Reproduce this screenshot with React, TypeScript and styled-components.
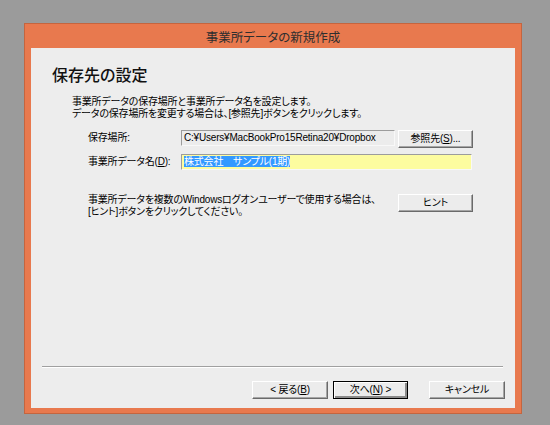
import React from 'react';
import styled, { createGlobalStyle } from 'styled-components';

const GlobalStyle = createGlobalStyle`
  html, body {
    margin: 0;
    padding: 0;
    background: #9b9b9b;
  }
  body {
    font-family: "Liberation Sans", "Noto Sans CJK JP", sans-serif;
    font-feature-settings: "palt";
    color: #000;
  }
`;

const Window = styled.div`
  box-sizing: border-box;
  margin: 23px 0 0 24px;
  width: 498px;
  height: 391px;
  display: flex;
  flex-direction: column;
  padding: 0 6px 5px;
  background: #e8794e;
  border: 1px solid #c4653f;
`;

const TitleBar = styled.div`
  height: 24px;
  display: flex;
  align-items: center;
  justify-content: center;
  font-family: "Noto Sans CJK JP", sans-serif;
  font-size: 12.5px;
  color: #2e2e2e;
`;

const Client = styled.div`
  flex: 1;
  display: flex;
  flex-direction: column;
  background: #ededed;
`;

const Body = styled.div`
  flex: 1;
  padding: 14px 0 0 21px;
`;

const Heading = styled.h1`
  margin: 0;
  font-family: "Noto Sans CJK JP", sans-serif;
  font-size: 16px;
  font-weight: 500;
  line-height: 24px;
  color: #111;
`;

const Description = styled.p`
  margin: 10px 0 0 20px;
  font-size: 10px;
  letter-spacing: -0.2px;
  line-height: 12px;
  white-space: nowrap;
`;

const Form = styled.div`
  margin: 10px 0 0 36px;
  display: flex;
  flex-direction: column;
  gap: 6px;
`;

const Row = styled.div`
  display: flex;
  align-items: flex-start;
`;

const Label = styled.div`
  width: 93px;
  font-size: 10px;
  letter-spacing: -0.2px;
  line-height: 16px;
  white-space: nowrap;
`;

const Field = styled.div<{ $width: number; $bg?: string }>`
  box-sizing: border-box;
  width: ${p => p.$width}px;
  height: 16px;
  padding: 0 2px;
  font-size: 10px;
  letter-spacing: -0.2px;
  line-height: 14px;
  white-space: nowrap;
  overflow: hidden;
  background: ${p => p.$bg || '#ececec'};
  border: 1px solid;
  border-color: #9c9c9c #f8f8f8 #f8f8f8 #9c9c9c;
`;

const Selected = styled.span`
  background: #3399ff;
  color: #fff;
`;

const Button = styled.button<{ $width: number; $default?: boolean }>`
  box-sizing: border-box;
  width: ${p => p.$width}px;
  height: 18px;
  padding: 0;
  margin: 0;
  font-family: inherit;
  font-feature-settings: "palt";
  font-size: 10px;
  letter-spacing: -0.2px;
  line-height: 14px;
  color: #000;
  background: #ececec;
  border: 1px solid;
  border-color: ${p => (p.$default ? '#000' : '#fff #6a6a6a #6a6a6a #fff')};
  box-shadow: ${p =>
    p.$default
      ? 'inset 1px 1px #fff, inset -2px -2px #8a8a8a'
      : 'inset -1px -1px #a5a5a5'};
  white-space: nowrap;
  u {
    text-decoration: underline;
  }
`;

const BrowseButton = styled(Button)`
  margin-left: 3px;
`;

const HintRow = styled.div`
  margin: 24px 0 0 36px;
  display: flex;
  align-items: flex-start;
  width: 385px;
`;

const HintText = styled.div`
  flex: 1;
  font-size: 10px;
  letter-spacing: -0.2px;
  line-height: 12px;
  white-space: nowrap;
`;

const Footer = styled.div`
  display: flex;
  flex-direction: column;
  padding-bottom: 9px;
`;

const Separator = styled.div`
  margin: 0 12px 0 11px;
  height: 0;
  border-top: 1px solid #a0a0a0;
  border-bottom: 1px solid #fff;
`;

const ButtonBar = styled.div`
  margin-top: 13px;
  padding-right: 10px;
  display: flex;
  justify-content: flex-end;
  gap: 5px;
`;

const CancelButton = styled(Button)`
  margin-left: 16px;
`;

function App() {
  return (
    <>
      <GlobalStyle />
      <Window>
        <TitleBar>事業所データの新規作成</TitleBar>
        <Client>
          <Body>
            <Heading>保存先の設定</Heading>
            <Description>
              事業所データの保存場所と事業所データ名を設定します。
              <br />
              データの保存場所を変更する場合は、[参照先]ボタンをクリックします。
            </Description>
            <Form>
              <Row>
                <Label>保存場所:</Label>
                <Field $width={214}>C:¥Users¥MacBookPro15Retina20¥Dropbox</Field>
                <BrowseButton $width={75}>
                  参照先(<u>S</u>)...
                </BrowseButton>
              </Row>
              <Row>
                <Label>
                  事業所データ名(<u>D</u>):
                </Label>
                <Field $width={291} $bg="#fdfc9f">
                  <Selected>株式会社　サンプル(1期)</Selected>
                </Field>
              </Row>
            </Form>
            <HintRow>
              <HintText>
                事業所データを複数のWindowsログオンユーザーで使用する場合は、
                <br />
                [ヒント]ボタンをクリックしてください。
              </HintText>
              <Button $width={75}>ヒント</Button>
            </HintRow>
          </Body>
          <Footer>
            <Separator />
            <ButtonBar>
              <Button $width={76}>
                &lt; 戻る(<u>B</u>)
              </Button>
              <Button $width={75} $default>
                次へ(<u>N</u>) &gt;
              </Button>
              <CancelButton $width={76}>キャンセル</CancelButton>
            </ButtonBar>
          </Footer>
        </Client>
      </Window>
    </>
  );
}

export default App;
